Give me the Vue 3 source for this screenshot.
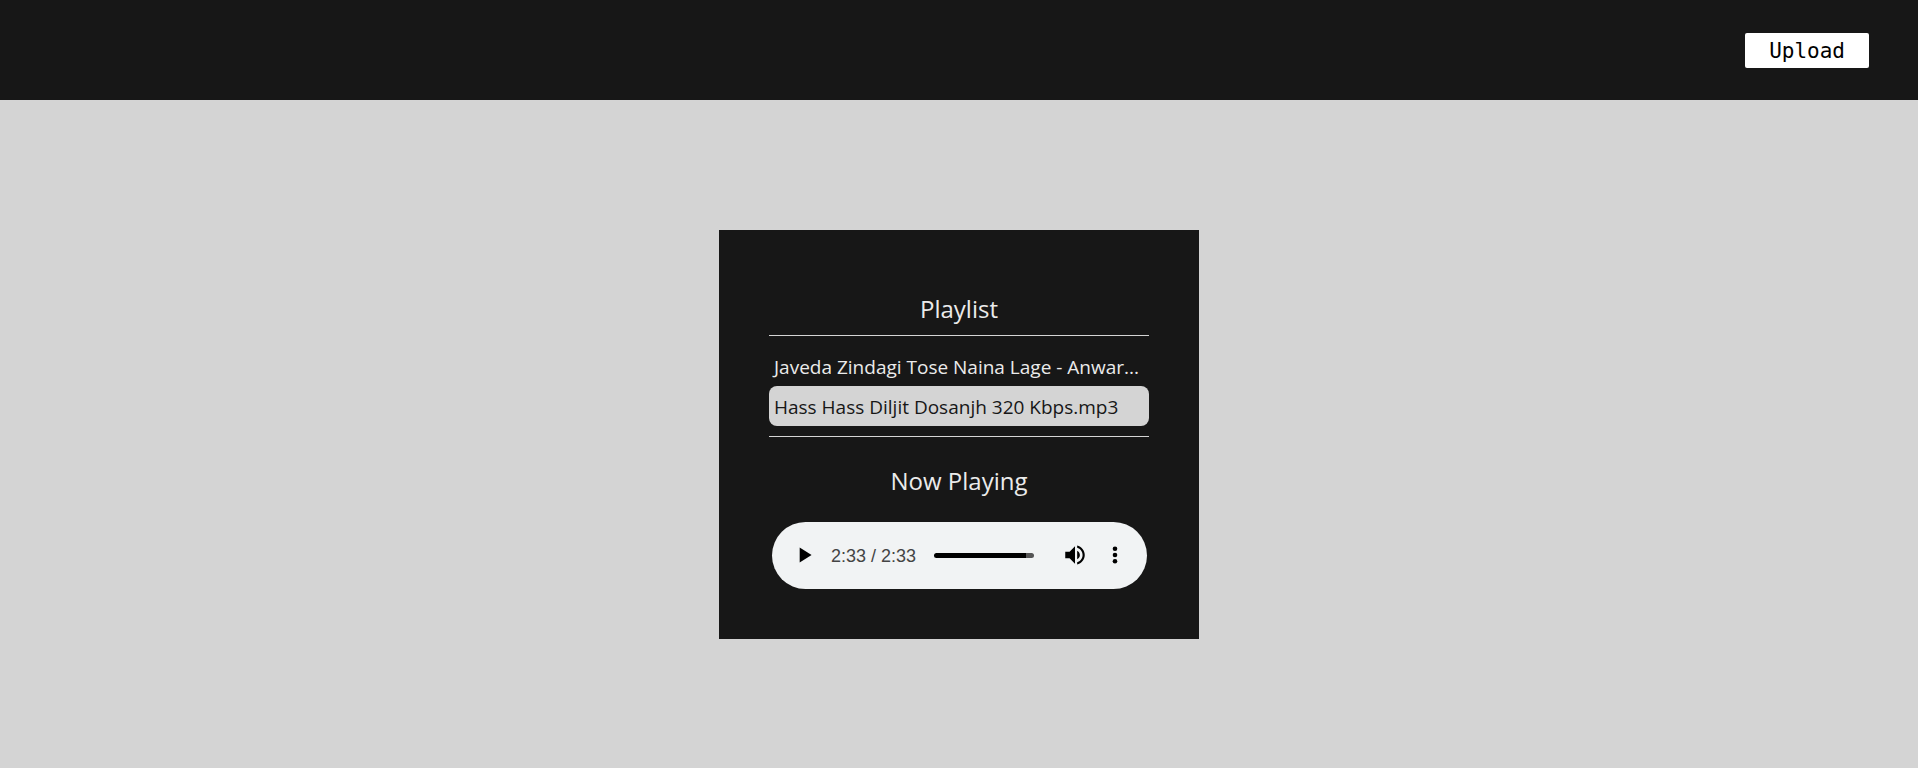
<script setup>
import { ref, computed } from 'vue'

const tracks = [
  'Javeda Zindagi Tose Naina Lage - Anwar...',
  'Hass Hass Diljit Dosanjh 320 Kbps.mp3',
]
const current = ref(1)
const position = ref(92)
const trackFill = computed(() => ({ '--played': position.value + '%' }))
</script>

<template>
  <div class="page">
    <header class="topbar">
      <button type="button" class="upload">Upload</button>
    </header>
    <main class="stage">
      <section class="card">
        <h1 class="title">Playlist</h1>
        <ul class="tracks">
          <li v-for="(name, i) in tracks" :key="name">
            <button
              type="button"
              class="track"
              :class="{ active: i === current }"
              @click="current = i"
            >{{ name }}</button>
          </li>
        </ul>
        <h2 class="title now">Now Playing</h2>
        <div class="player">
          <button type="button" class="icon play" aria-label="Play">
            <svg viewBox="0 0 24 24" width="26" height="26"><path d="M8 5v14l11-7z" /></svg>
          </button>
          <span class="time">2:33 / 2:33</span>
          <input
            v-model.number="position"
            class="seek"
            type="range"
            min="0"
            max="100"
            aria-label="Seek"
            :style="trackFill"
          />
          <button type="button" class="icon volume" aria-label="Mute">
            <svg viewBox="0 0 24 24" width="26" height="26"><path d="M3 9v6h4l5 5V4L7 9H3zm13.5 3c0-1.77-1.02-3.29-2.5-4.03v8.05c1.48-.73 2.5-2.25 2.5-4.02zM14 3.23v2.06c2.89.86 5 3.54 5 6.71s-2.11 5.85-5 6.71v2.06c4.01-.91 7-4.49 7-8.77s-2.99-7.86-7-8.77z" /></svg>
          </button>
          <button type="button" class="icon more" aria-label="More options">
            <svg viewBox="0 0 26 26" width="26" height="26"><circle cx="13" cy="6.7" r="2.3" /><circle cx="13" cy="13" r="2.3" /><circle cx="13" cy="19.3" r="2.3" /></svg>
          </button>
        </div>
      </section>
    </main>
  </div>
</template>

<style>
body {
  margin: 0;
  background: #d4d4d4;
}
</style>

<style scoped>
.page {
  display: flex;
  flex-direction: column;
  min-height: 100vh;
  font-family: "Open Sans", "Noto Sans", sans-serif;
}

button {
  margin: 0;
  border: 0;
  font: inherit;
  cursor: pointer;
}

.topbar {
  display: flex;
  align-items: center;
  justify-content: flex-end;
  box-sizing: border-box;
  height: 100px;
  padding: 0 49px;
  background: #171717;
}

.upload {
  padding: 6px 24px 4px;
  border-radius: 2px;
  background: #fff;
  color: #000;
  font-family: "DejaVu Sans Mono", monospace;
  font-size: 21px;
  line-height: 25px;
}

.stage {
  display: flex;
  flex: 1;
  align-items: center;
  justify-content: center;
}

.card {
  box-sizing: border-box;
  width: 480px;
  padding: 50px;
  background: #171717;
  color: #ebebeb;
}

.title {
  margin: 0;
  padding: 11px 0 9px;
  font-size: 24px;
  font-weight: 400;
  line-height: 35px;
  text-align: center;
}

.tracks {
  margin: 0;
  padding: 10px 0;
  border-top: 1px solid #d4d4d4;
  border-bottom: 1px solid #d4d4d4;
  list-style: none;
}

.track {
  display: block;
  width: 100%;
  padding: 6px 5px 4px;
  overflow: hidden;
  border-radius: 8px;
  background: none;
  color: #ebebeb;
  font-size: 19px;
  line-height: 30px;
  text-align: left;
  white-space: nowrap;
}

.active {
  background: #d4d4d4;
  color: #171717;
}

.now {
  padding: 26px 0 24px;
}

.player {
  display: flex;
  align-items: center;
  box-sizing: border-box;
  height: 67px;
  margin: 0 2px 0 3px;
  padding: 0 19px;
  border-radius: 34px;
  background: #f1f3f4;
}

.icon {
  display: flex;
  flex: none;
  padding: 0;
  background: none;
  color: #000;
}

.icon svg {
  fill: currentColor;
}

.time {
  margin-left: 14px;
  padding-top: 2px;
  color: #444;
  font-family: "Liberation Sans", Arial, sans-serif;
  font-size: 18px;
  white-space: nowrap;
}

.seek {
  flex: 1;
  min-width: 0;
  height: 5px;
  margin: 0 28px 0 18px;
  border-radius: 3px;
  appearance: none;
  background: linear-gradient(to right, #000 var(--played), #555 var(--played));
}

.seek::-webkit-slider-thumb {
  width: 1px;
  height: 5px;
  appearance: none;
  background: transparent;
}

.more {
  margin-left: 14px;
}
</style>
